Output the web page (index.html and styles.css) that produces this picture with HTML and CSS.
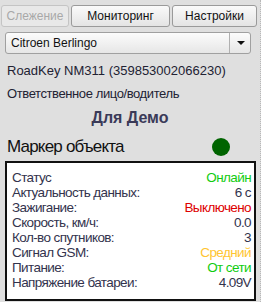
FILE: index.html
```html
<!DOCTYPE html>
<html lang="ru">
	<head>
		<meta charset="utf-8">
		<title>Мониторинг</title>
		<link rel="stylesheet" href="styles.css">
	</head>
	<body>
		<div class="tabs">
			<button class="tab" disabled>Слежение</button>
			<button class="tab tab-wide">Мониторинг</button>
			<button class="tab">Настройки</button>
		</div>

		<div class="select">
			<span class="select-text">Citroen Berlingo</span>
			<span class="select-arrow"></span>
		</div>

		<p class="device">RoadKey NM311 (359853002066230)</p>
		<p class="person">Ответственное лицо/водитель</p>
		<h2 class="owner">Для Демо</h2>

		<div class="marker">
			<span>Маркер объекта</span>
			<span class="dot"></span>
		</div>

		<div class="info">
			<div class="row"><span>Статус</span><span class="green">Онлайн</span></div>
			<div class="row"><span>Актуальность данных:</span><span>6 с</span></div>
			<div class="row"><span>Зажигание:</span><span class="red">Выключено</span></div>
			<div class="row"><span>Скорость, км/ч:</span><span>0.0</span></div>
			<div class="row"><span>Кол-во спутников:</span><span>3</span></div>
			<div class="row"><span>Сигнал GSM:</span><span class="yellow">Средний</span></div>
			<div class="row"><span>Питание:</span><span class="green">От сети</span></div>
			<div class="row"><span>Напряжение батареи:</span><span>4.09V</span></div>
		</div>
	</body>
</html>
```

FILE: styles.css
```css
body {
	margin: 0;
	width: 261px;
	height: 302px;
	overflow: hidden;
	background: #dfdfdf;
	font-family: "Liberation Sans", Arial, sans-serif;
	color: #222233;
	border-right: 1px dotted #b8b8b8;
	box-sizing: border-box;
}

.tabs {
	display: flex;
	gap: 2px;
	padding: 5px 3px 0 1px;
}

.tab {
	flex: 68px 0 0;
	height: 22px;
	padding: 0;
	border: 1px solid #9a9a9a;
	border-radius: 3px;
	background: linear-gradient(#fafafa, #e4e4e4);
	font-family: inherit;
	font-size: 12px;
	color: #111;
}

.tab-wide {
	flex-basis: 99px;
}

.tab:last-child {
	flex: 1;
}

.tab:disabled {
	color: #a8a8a8;
	border-color: #c4c4c4;
	background: #e8e8e8;
}

.select {
	display: flex;
	align-items: center;
	height: 22px;
	margin: 5px 9px 0 5px;
	border: 1px solid #a0a0a0;
	border-radius: 3px;
	background: linear-gradient(#fcfcfc, #e6e6e6);
	box-sizing: border-box;
	font-size: 12px;
	color: #111;
}

.select-text {
	flex: 1;
	padding-left: 5px;
}

.select-arrow {
	position: relative;
	width: 20px;
	height: 100%;
	border-left: 1px solid #b0b0b0;
}

.select-arrow::after {
	content: "";
	position: absolute;
	left: 7px;
	top: 8px;
	border: 4px solid transparent;
	border-top: 4px solid #111;
	border-bottom: 0;
}

.device,
.person {
	margin: 0;
	padding-left: 7px;
	font-size: 13px;
}

.device {
	margin-top: 9px;
}

.person {
	margin-top: 8px;
	letter-spacing: -0.4px;
}

.owner {
	margin: 8px 0 0;
	text-align: center;
	font-size: 16px;
	color: #3a3a58;
}

.marker {
	display: flex;
	align-items: center;
	justify-content: space-between;
	margin: 10px 30px 0 7px;
	font-size: 17px;
	letter-spacing: -0.8px;
	color: #111;
}

.dot {
	width: 18px;
	height: 18px;
	border-radius: 50%;
	background: #006400;
}

.info {
	margin: 4px 5px 0 5px;
	padding: 7px 3px 9px 5px;
	border: 2px solid #111;
	background: #fff;
	font-size: 13.5px;
	letter-spacing: -0.6px;
	line-height: 15px;
	color: #33334d;
	width: 251px;
	box-sizing: border-box;
}

.row {
	display: flex;
	justify-content: space-between;
}

.green {
	color: #11cc11;
}

.red {
	color: #dd0000;
}

.yellow {
	color: #ffc532;
}
```
